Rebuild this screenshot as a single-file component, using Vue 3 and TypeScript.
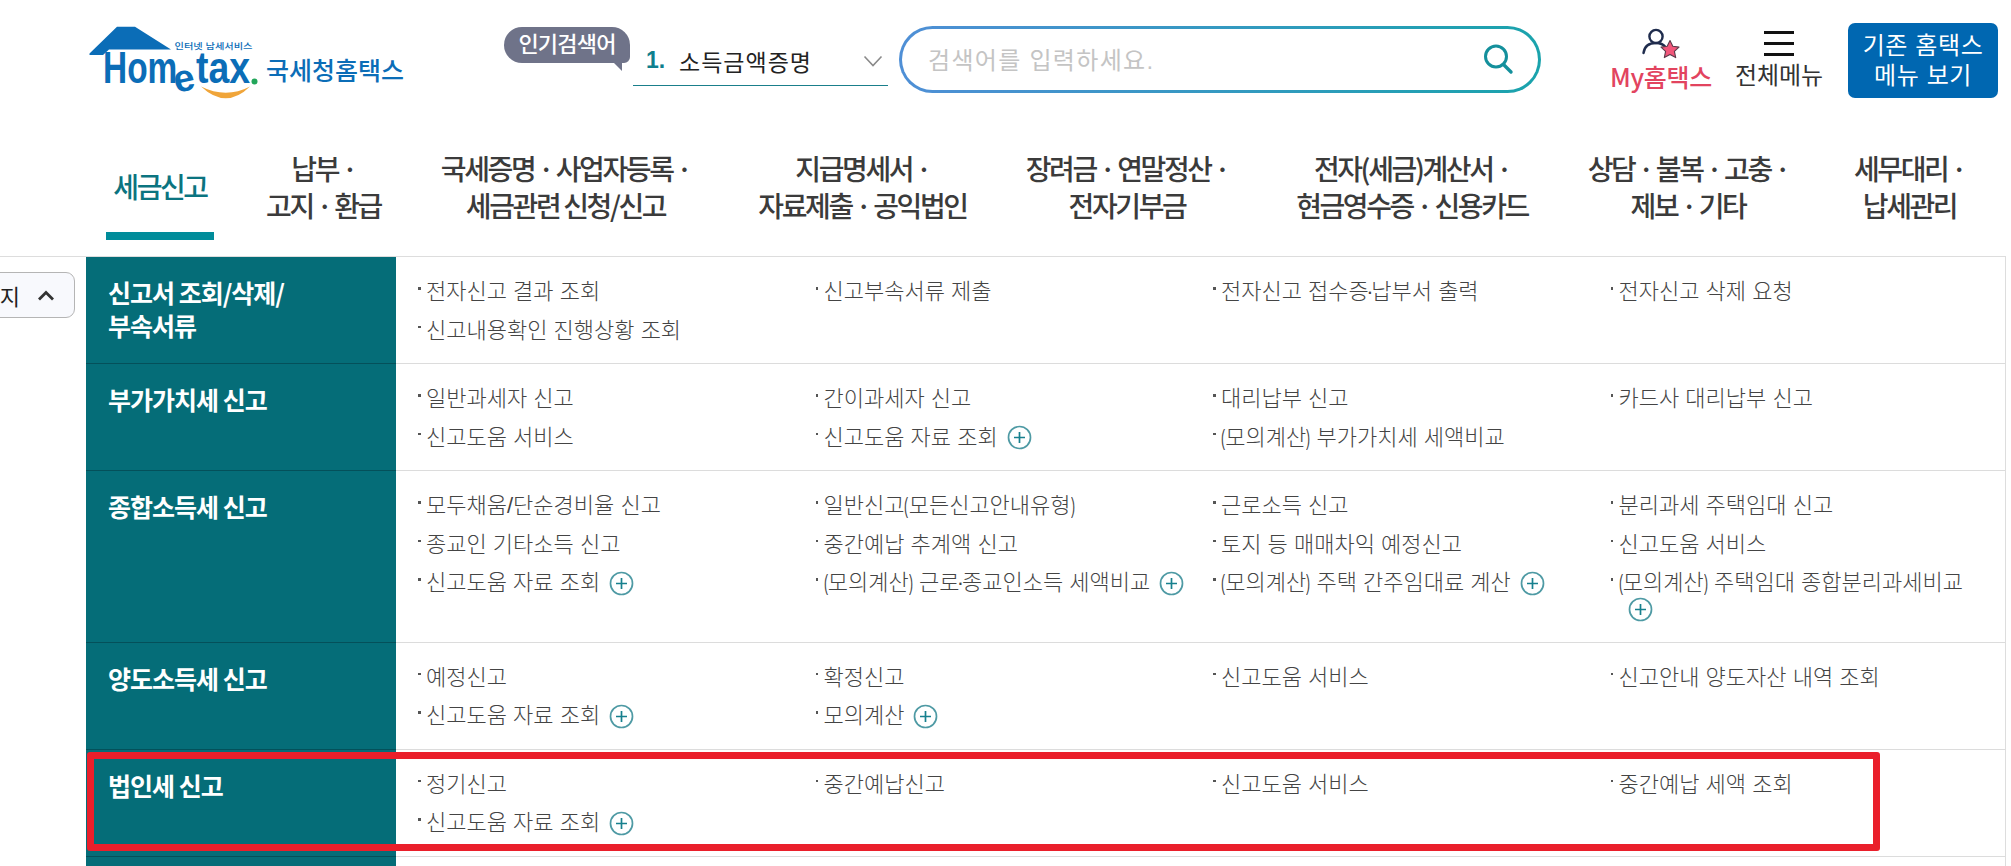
<script setup lang="ts">
interface Item { t: string; plus?: boolean }
interface Row { title: string[]; items: Item[] }

const nav: { lines: string[]; w: number; ml: number; active?: boolean }[] = [
  { lines: ['세금신고'], w: 108, ml: 0, active: true },
  { lines: ['납부 ·', '고지 · 환급'], w: 117, ml: 51 },
  { lines: ['국세증명 · 사업자등록 ·', '세금관련 신청/신고'], w: 251, ml: 58 },
  { lines: ['지급명세서 ·', '자료제출 · 공익법인'], w: 211, ml: 66 },
  { lines: ['장려금 · 연말정산 ·', '전자기부금'], w: 204, ml: 57 },
  { lines: ['전자(세금)계산서 ·', '현금영수증 · 신용카드'], w: 234, ml: 66 },
  { lines: ['상담 · 불복 · 고충 ·', '제보 · 기타'], w: 204, ml: 57 },
  { lines: ['세무대리 ·', '납세관리'], w: 105, ml: 67 }
]

const rows: Row[] = [
  {
    title: ['신고서 조회/삭제/', '부속서류'],
    items: [
      { t: '전자신고 결과 조회' }, { t: '신고부속서류 제출' }, { t: '전자신고 접수증·납부서 출력' }, { t: '전자신고 삭제 요청' },
      { t: '신고내용확인 진행상황 조회' }
    ]
  },
  {
    title: ['부가가치세 신고'],
    items: [
      { t: '일반과세자 신고' }, { t: '간이과세자 신고' }, { t: '대리납부 신고' }, { t: '카드사 대리납부 신고' },
      { t: '신고도움 서비스' }, { t: '신고도움 자료 조회', plus: true }, { t: '(모의계산) 부가가치세 세액비교' }
    ]
  },
  {
    title: ['종합소득세 신고'],
    items: [
      { t: '모두채움/단순경비율 신고' }, { t: '일반신고(모든신고안내유형)' }, { t: '근로소득 신고' }, { t: '분리과세 주택임대 신고' },
      { t: '종교인 기타소득 신고' }, { t: '중간예납 추계액 신고' }, { t: '토지 등 매매차익 예정신고' }, { t: '신고도움 서비스' },
      { t: '신고도움 자료 조회', plus: true }, { t: '(모의계산) 근로·종교인소득 세액비교', plus: true },
      { t: '(모의계산) 주택 간주임대료 계산', plus: true }, { t: '(모의계산) 주택임대 종합분리과세비교', plus: true }
    ]
  },
  {
    title: ['양도소득세 신고'],
    items: [
      { t: '예정신고' }, { t: '확정신고' }, { t: '신고도움 서비스' }, { t: '신고안내 양도자산 내역 조회' },
      { t: '신고도움 자료 조회', plus: true }, { t: '모의계산', plus: true }
    ]
  },
  {
    title: ['법인세 신고'],
    items: [
      { t: '정기신고' }, { t: '중간예납신고' }, { t: '신고도움 서비스' }, { t: '중간예납 세액 조회' },
      { t: '신고도움 자료 조회', plus: true }
    ]
  }
]

const parts = (t: string): string[] => t.split(/([()·])/).filter((s) => s.length > 0)
</script>

<template>
  <div class="page">
    <header class="top">
      <div class="logo">
        <svg class="logo-mark" width="186" height="90" viewBox="0 0 186 90">
          <path d="M9.5 38.5 L37 11.7 L55 11.7 L91 34.5 L35 34.5 L29 34.5 L23 40 L9.5 40 Z" fill="#0b6db7" />
          <path d="M121 71.5 Q146 95 170 71.5 Q146 84 121 71.5 Z" fill="#f0a53a" />
          <circle cx="174.5" cy="66.5" r="3" fill="#22a65a" />
          <text class="lg-word" transform="translate(23 68) scale(0.76 1)">Hom</text>
          <text class="lg-e" transform="translate(96 78) rotate(-12)">e</text>
          <text class="lg-word" transform="translate(116 68) scale(0.85 1)">tax</text>
          <text x="94.5" y="34" class="lg-small" textLength="78" lengthAdjust="spacingAndGlyphs">인터넷 납세서비스</text>
        </svg>
        <span class="logo-name">국세청홈택스</span>
      </div>
      <div class="bubble">인기검색어</div>
      <div class="pop-select">
        <span class="pop-no">1.</span>
        <span class="pop-text">소득금액증명</span>
        <svg class="chev" width="20" height="12" viewBox="0 0 20 12"><path d="M1.5 1.5 L10 10.5 L18.5 1.5" fill="none" stroke="#8a8a8a" stroke-width="1.6" /></svg>
      </div>
      <div class="search">
        <span class="ph">검색어를 입력하세요.</span>
        <svg width="36" height="36" viewBox="0 0 36 36"><circle cx="16" cy="15.5" r="10.5" fill="none" stroke="#14909c" stroke-width="3" /><path d="M23.5 23.5 L31 31" stroke="#14909c" stroke-width="3.4" stroke-linecap="round" /></svg>
      </div>
      <div class="my">
        <svg width="40" height="34" viewBox="0 0 40 34">
          <circle cx="15" cy="9.5" r="6.6" fill="none" stroke="#1f2c4d" stroke-width="2.4" />
          <path d="M2.5 26 C3.5 18.5 9 16 15 16 C19.5 16 22.5 17.5 24.5 20" fill="none" stroke="#1f2c4d" stroke-width="2.4" stroke-linecap="round" />
          <path d="M29 13.5 L31.8 19.3 L38 20.1 L33.4 24.4 L34.7 30.6 L29 27.5 L23.3 30.6 L24.6 24.4 L20 20.1 L26.2 19.3 Z" fill="#f2567a" stroke="#5b3a4a" stroke-width="1.1" stroke-linejoin="round" />
        </svg>
        <span class="my-label">My홈택스</span>
      </div>
      <div class="allmenu">
        <span class="burger"><i></i><i></i><i></i></span>
        <span class="all-label">전체메뉴</span>
      </div>
      <div class="oldbtn"><span>기존 홈택스</span><span>메뉴 보기</span></div>
    </header>

    <nav class="gnb">
      <div v-for="n in nav" :key="n.lines[0]" class="gnb-item" :class="{ on: n.active }" :style="{ width: n.w + 'px', marginLeft: n.ml + 'px' }">
        <span v-for="l in n.lines" :key="l">{{ l }}</span>
      </div>
    </nav>

    <main class="board">
      <div class="side-tab"><span>메뉴 접지</span><svg width="18" height="11" viewBox="0 0 18 11"><path d="M2 9.5 L9 2.5 L16 9.5" fill="none" stroke="#333" stroke-width="2.8" /></svg></div>
      <div v-for="r in rows" :key="r.title[0]" class="row">
        <div class="row-title"><span v-for="l in r.title" :key="l">{{ l }}</span></div>
        <ul class="row-items">
          <li v-for="it in r.items" :key="it.t">
            <i class="dot"></i><span class="it-text"><span v-for="(p, i) in parts(it.t)" :key="i" :class="{ paren: p === '(' || p === ')', mid: p === '·' }">{{ p }}</span><svg v-if="it.plus" class="plus" width="25" height="25" viewBox="0 0 25 25"><circle cx="12.5" cy="12.5" r="11" fill="#fff" stroke="#4e9aa4" stroke-width="1.7" /><path d="M7 12.5 H18 M12.5 7 V18" stroke="#17808e" stroke-width="1.7" /></svg></span>
          </li>
        </ul>
      </div>
      <div class="row-tail"></div>
      <div class="mark"></div>
    </main>
  </div>
</template>

<style scoped>
.page {
  width: 2011px;
  height: 866px;
  overflow: hidden;
  position: relative;
  background: #fff;
  font-family: "Liberation Sans", "Noto Sans CJK KR", sans-serif;
  color: #333;
}
.top {
  height: 112px;
  display: flex;
  align-items: flex-start;
}
.logo {
  display: flex;
  margin-left: 80px;
  width: 424px;
  padding-top: 15px;
  box-sizing: border-box;
  flex: none;
}
.logo-mark { flex: none; display: block; }
.lg-word { font-family: "Liberation Sans", sans-serif; font-weight: 700; font-size: 44px; fill: #0b6db7; }
.lg-e { font-family: "Liberation Sans", sans-serif; font-weight: 700; font-size: 38px; fill: #0b6db7; }
.lg-small { font-size: 8.5px; fill: #0b6db7; font-weight: 500; }
.logo-name {
  font-family: "Noto Sans CJK KR", sans-serif;
  font-size: 25px;
  font-weight: 500;
  color: #0b6db7;
  line-height: 34px;
  margin-top: 37px;
  white-space: nowrap;
}
.bubble {
  margin-top: 27px;
  width: 126px;
  height: 36px;
  line-height: 35px;
  border-radius: 18px 18px 6px 18px;
  background: #6f7389;
  color: #fff;
  font-size: 22px;
  font-weight: 500;
  text-align: center;
  letter-spacing: -0.8px;
  position: relative;
  flex: none;
}
.bubble::after {
  content: "";
  position: absolute;
  right: 8px;
  bottom: -8px;
  border-top: 10px solid #6f7389;
  border-left: 10px solid transparent;
}
.pop-select {
  margin: 40px 0 0 3px;
  width: 255px;
  height: 46px;
  border-bottom: 1px solid #1a7f8b;
  box-sizing: border-box;
  display: flex;
  align-items: center;
  flex: none;
  padding: 0 0 4px 13px;
  font-size: 23px;
}
.pop-no { color: #0f7f8d; font-weight: 700; width: 33px; }
.pop-text { color: #222; letter-spacing: 1px; }
.chev { margin-left: auto; margin-right: 5px; }
.search {
  margin: 26px 0 0 11px;
  width: 642px;
  height: 67px;
  border-radius: 34px;
  box-sizing: border-box;
  border: 3px solid transparent;
  background: linear-gradient(#fff, #fff) padding-box, linear-gradient(90deg, #4f8fd6, #1aa3ac) border-box;
  display: flex;
  align-items: center;
  justify-content: space-between;
  padding: 0 22px 2px 26px;
  flex: none;
}
.ph { font-size: 24px; color: #c4c4c4; letter-spacing: 1.3px; }
.my {
  margin: 27px 0 0 69px;
  width: 102px;
  display: flex;
  flex-direction: column;
  align-items: center;
  flex: none;
}
.my-label {
  font-family: "Noto Sans CJK KR", sans-serif;
  color: #e2445f;
  font-size: 25px;
  font-weight: 500;
  line-height: 30px;
  letter-spacing: -0.3px;
  white-space: nowrap;
}
.allmenu {
  margin: 31px 0 0 22px;
  width: 90px;
  display: flex;
  flex-direction: column;
  align-items: center;
  flex: none;
}
.burger { display: flex; flex-direction: column; gap: 8px; width: 30px; }
.burger i { height: 3px; background: #111; display: block; }
.all-label { font-size: 24px; line-height: 30px; margin-top: 5px; color: #333; letter-spacing: -0.1px; white-space: nowrap; }
.oldbtn {
  margin: 23px 0 0 24px;
  width: 150px;
  height: 75px;
  border-radius: 7px;
  background: #0067b1;
  color: #fff;
  font-size: 24px;
  display: flex;
  flex-direction: column;
  align-items: center;
  justify-content: center;
  line-height: 30px;
  letter-spacing: 0.6px;
  flex: none;
  white-space: nowrap;
  padding-top: 1px;
  box-sizing: border-box;
}
.gnb {
  height: 145px;
  box-sizing: border-box;
  border-bottom: 1px solid #ddd;
  display: flex;
  padding-left: 106px;
  width: 2006px;
  white-space: nowrap;
}
.gnb-item {
  font-family: "Noto Sans CJK KR", sans-serif;
  height: 128px;
  flex: none;
  display: flex;
  flex-direction: column;
  align-items: center;
  justify-content: center;
  font-size: 28px;
  font-weight: 500;
  line-height: 37px;
  letter-spacing: -2.4px;
  color: #3b3b3b;
  padding-top: 29px;
  box-sizing: border-box;
  border-bottom: 8px solid transparent;
}
.gnb-item.on {
  color: #0b7480;
  border-bottom-color: #008c9a;
}
.board {
  position: relative;
  margin-left: 86px;
  width: 1920px;
  box-sizing: border-box;
  border-right: 1px solid #ddd;
  height: 609px;
}
.side-tab {
  position: absolute;
  left: -156px;
  top: 15px;
  width: 145px;
  height: 46px;
  box-sizing: border-box;
  border: 1px solid #b5b5b5;
  border-radius: 9px;
  background: #f8f9fd;
  display: flex;
  align-items: center;
  justify-content: flex-end;
  gap: 17px;
  padding-right: 19px;
  font-size: 22px;
  color: #222;
  white-space: nowrap;
}
.side-tab span, .side-tab svg { flex: none; }
.row {
  display: flex;
  border-bottom: 1px solid #dcdcdc;
}
.row-title {
  font-family: "Noto Sans CJK KR", sans-serif;
  width: 310px;
  flex: none;
  background: #056d78;
  border-bottom: 1px solid #04505a;
  margin-bottom: -1px;
  color: #fff;
  font-size: 25px;
  font-weight: 700;
  line-height: 33px;
  letter-spacing: -1px;
  padding: 19px 0 0 22px;
  box-sizing: border-box;
  display: flex;
  flex-direction: column;
}
.row-items {
  flex: 1;
  list-style: none;
  margin: 0;
  padding: 22px 0 19.5px 20px;
  display: grid;
  grid-template-columns: repeat(4, 397.5px);
  row-gap: 12.5px;
  align-content: start;
}
.row-items li {
  display: flex;
  font-size: 22px;
  line-height: 26px;
  color: #444;
  font-weight: 300;
  padding-right: 20px;
  box-sizing: border-box;
}
.dot {
  width: 2.5px;
  height: 2.5px;
  background: #555;
  flex: none;
  margin: 8px 5.5px 0 2px;
}
.it-text { min-width: 0; }
.paren {
  display: inline-block;
  width: 4.2px;
  transform: scaleX(0.55);
  transform-origin: left center;
}
.mid {
  display: inline-block;
  width: 2.5px;
  transform: translateX(-2.6px);
}
.plus { vertical-align: middle; margin: -6px 0 -4px 9px; }
.row-tail {
  width: 310px;
  height: 12px;
  background: #056d78;
}
.mark {
  position: absolute;
  left: 1px;
  top: 495px;
  width: 1793px;
  height: 99px;
  box-sizing: border-box;
  border: 7px solid #ea1f2b;
  border-radius: 3px;
  pointer-events: none;
}
</style>

<style>
html, body { margin: 0; overflow: hidden; background: #fff; }
</style>
